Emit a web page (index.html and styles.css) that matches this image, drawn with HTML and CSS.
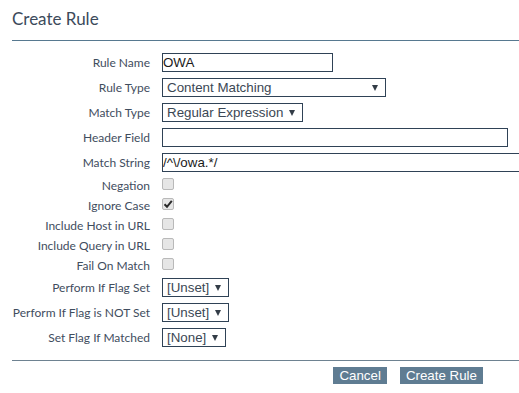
FILE: index.html
```html
<!DOCTYPE html>
<html lang="en">
<head>
<meta charset="utf-8">
<title>Create Rule</title>
<link rel="stylesheet" href="styles.css">
</head>
<body>
<div class="dialog">
  <h1 class="title">Create Rule</h1>
  <form class="form">
    <div class="row"><label class="lbl">Rule Name</label><input class="txt w-name" type="text" value="OWA"></div>
    <div class="row"><label class="lbl">Rule Type</label><select class="sel w-type"><option>Content Matching</option></select></div>
    <div class="row"><label class="lbl">Match Type</label><select class="sel w-match"><option>Regular Expression</option></select></div>
    <div class="row"><label class="lbl">Header Field</label><input class="txt w-header" type="text" value=""></div>
    <div class="row"><label class="lbl">Match String</label><input class="txt w-string" type="text" value="/^\/owa.*/"></div>
    <div class="row row-cb"><label class="lbl">Negation</label><input class="cb" type="checkbox"></div>
    <div class="row row-cb"><label class="lbl">Ignore Case</label><input class="cb" type="checkbox" checked></div>
    <div class="row row-cb"><label class="lbl">Include Host in URL</label><input class="cb" type="checkbox"></div>
    <div class="row row-cb"><label class="lbl">Include Query in URL</label><input class="cb" type="checkbox"></div>
    <div class="row row-cb"><label class="lbl">Fail On Match</label><input class="cb" type="checkbox"></div>
    <div class="row"><label class="lbl">Perform If Flag Set</label><select class="sel w-flag"><option>[Unset]</option></select></div>
    <div class="row"><label class="lbl">Perform If Flag is NOT Set</label><select class="sel w-flag"><option>[Unset]</option></select></div>
    <div class="row"><label class="lbl">Set Flag If Matched</label><select class="sel w-none"><option>[None]</option></select></div>
  </form>
  <div class="footer">
    <button class="btn" type="button">Cancel</button>
    <button class="btn" type="button">Create Rule</button>
  </div>
</div>
</body>
</html>
```

FILE: styles.css
```css
html, body {
  margin: 0;
  padding: 0;
  overflow: hidden;
  background: #ffffff;
}

.dialog {
  margin-left: 12px;
  font-family: Lato, "Open Sans", sans-serif;
  color: #3d4b5c;
}

.title {
  margin: 0;
  padding: 9px 0 11px 0;
  font-size: 17px;
  line-height: 20px;
  font-weight: normal;
  color: #3c4a5b;
  border-bottom: 1px solid #577990;
}

.form {
  padding: 9px 0 10px 0;
  border-bottom: 1px solid #6e8291;
  margin: 0;
}

.row {
  display: flex;
  align-items: center;
  height: 25px;
}

.row-cb {
  height: 20px;
}

.lbl {
  flex: 0 0 138px;
  margin-right: 12px;
  text-align: right;
  font-size: 12px;
  white-space: nowrap;
  color: #3f4d5e;
}

.txt, .sel {
  box-sizing: border-box;
  height: 19px;
  margin: 0;
  border: 1px solid #2f4256;
  border-radius: 0;
  font-family: "Liberation Sans", Arial, sans-serif;
  font-size: 13.33px;
  background-color: #ffffff;
  outline: none;
  flex: none;
}

.txt {
  padding: 0 0 0 0;
  color: #1a1a1a;
}

.sel {
  -webkit-appearance: none;
  appearance: none;
  padding: 0 18px 0 4px;
  color: #3b4754;
  background-image: url("data:image/svg+xml;utf8,<svg xmlns='http://www.w3.org/2000/svg' width='6' height='6'><polygon points='0,0 6,0 3,6' fill='%23333d47'/></svg>");
  background-repeat: no-repeat;
  background-position: right 7px center;
}

.w-name { width: 171px; }
.w-type { width: 224px; }
.w-match { width: 141px; }
.w-header { width: 346px; }
.w-string { width: 420px; }
.w-flag { width: 67px; }
.w-none { width: 64px; }

.cb {
  -webkit-appearance: none;
  appearance: none;
  box-sizing: border-box;
  width: 12px;
  height: 12px;
  margin: 0 0 2px 0;
  border: 1px solid #b9b9b9;
  border-radius: 2px;
  background-color: #e6e6e6;
  flex: none;
}

.cb:checked {
  background-image: url("data:image/svg+xml;utf8,<svg xmlns='http://www.w3.org/2000/svg' width='10' height='10'><path d='M1.5 5.2 L4 7.8 L8.8 1.8' fill='none' stroke='%232b2b2b' stroke-width='2'/></svg>");
  background-repeat: no-repeat;
  background-position: center;
}

.footer {
  display: flex;
  justify-content: flex-end;
  gap: 13px;
  padding: 6px 36px 0 0;
}

.btn {
  height: 17px;
  margin: 0;
  padding: 0 6px;
  border: none;
  border-radius: 0;
  background: #5f7c92;
  color: #ffffff;
  font-family: "Liberation Sans", Arial, sans-serif;
  font-size: 13.33px;
  line-height: 17px;
}
```
